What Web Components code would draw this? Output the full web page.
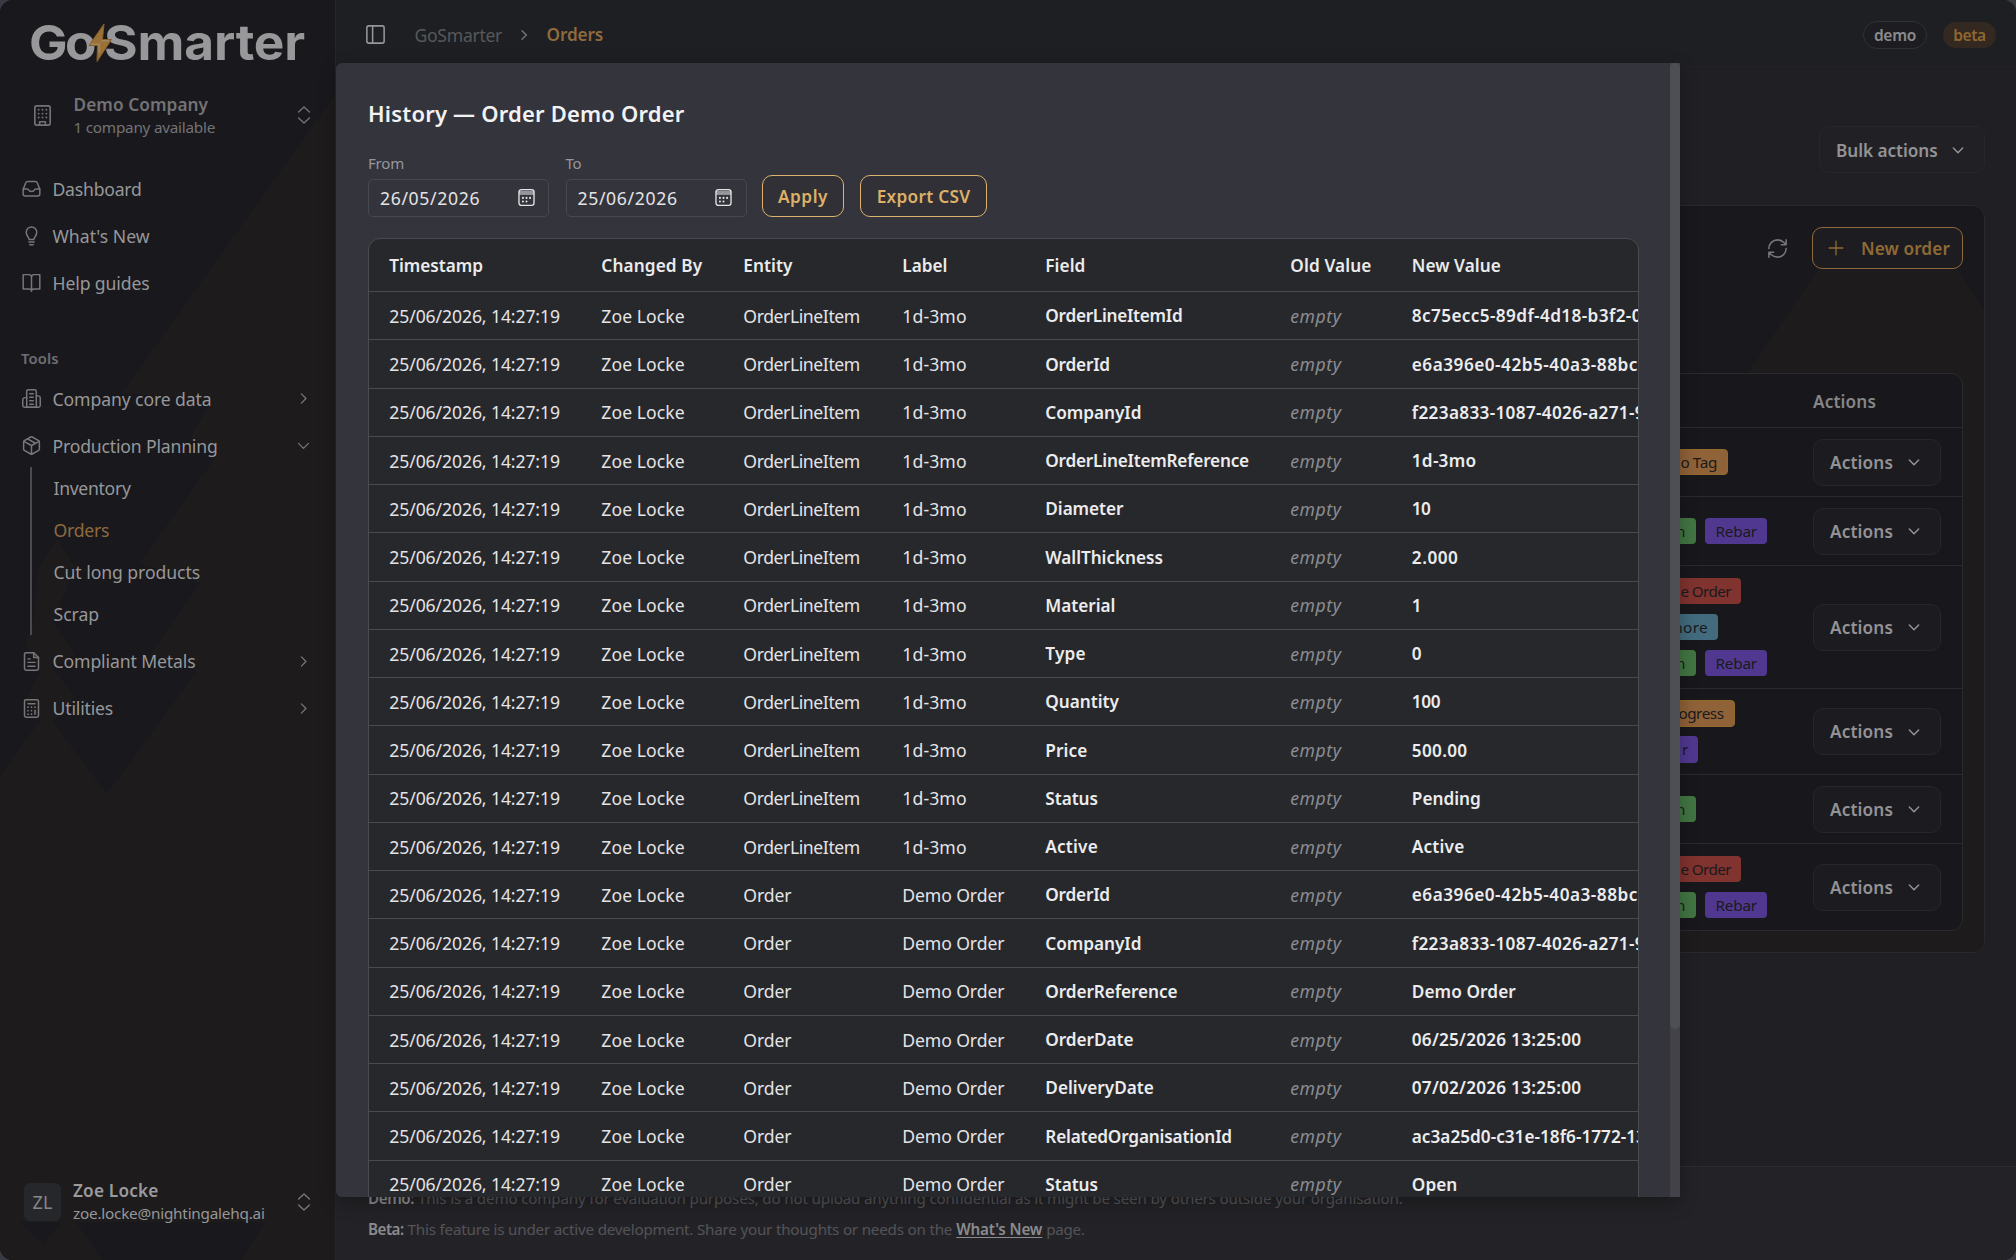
<!DOCTYPE html>
<html lang="en">
<head>
<meta charset="utf-8">
<title>GoSmarter – Orders</title>
<style>
html,body{margin:0;height:100%;background:#3a3a42;overflow:hidden}
body{font:17.600px/24px "Noto Sans","Open Sans",sans-serif;color:#97979a}
</style>
</head>
<body>
<app-shell></app-shell>
<script>
const define=(name,render,after)=>customElements.define(name,class extends HTMLElement{
  connectedCallback(){
    if(this.shadowRoot)return;
    this.attachShadow({mode:'open'}).innerHTML=render(this);
    if(after)after(this);
  }
});

/* Text run tracked to a known ink width; scale is the horizontal scale of its parent. */
define('fit-text',()=>`<style>:host{display:inline-block;white-space:nowrap}</style><slot></slot>`,el=>{
  const w=parseFloat(el.getAttribute('w'));
  if(!w)return;
  const n=el.textContent.length,k=parseFloat(el.getAttribute('scale'))||1;
  el.style.letterSpacing=((w+1.1-el.getBoundingClientRect().width)/n/k).toFixed(3)+'px';
});

const ICONS={
  panel:'<rect x="3" y="3" width="18" height="18" rx="2"/><path d="M9 3v18"/>',
  inbox:'<path d="M2.5 13l2.8-7.3A2.4 2.4 0 0 1 7.5 4h9a2.4 2.4 0 0 1 2.2 1.7L21.5 13v5.2a2.3 2.3 0 0 1-2.3 2.3H4.8a2.3 2.3 0 0 1-2.3-2.3z"/><path d="M2.5 12.5h4.8c.8 0 1.2.5 1.5 1.2.4 1.200 1.600 1.800 3.200 1.800s2.800-.6 3.200-1.800c.3-.7.7-1.200 1.500-1.200h4.800"/>',
  bulb:'<path d="M9.300 16.500c0-2-3.300-4-3.300-8.300a6 6 0 0 1 12 0c0 4.300-3.300 6.300-3.300 8.300z"/><path d="M9 19.500h6M10 22.500h4"/>',
  book:'<path d="M12 6v16M12 6c0-1.700-1.300-3-3-3H2.500v16.500H9c1.700 0 3 1 3 2.500 0-1.500 1.300-2.500 3-2.500h6.500V3H15c-1.700 0-3 1.300-3 3z"/>',
  building:'<rect x="4" y="2" width="16" height="20" rx="2"/><path d="M9 22v-3.500h6V22"/><path d="M8 6h.01M12 6h.01M16 6h.01M8 10h.01M12 10h.01M16 10h.01M8 14h.01M12 14h.01M16 14h.01" stroke-width="2"/>',
  office:'<path d="M6.500 22V4a2 2 0 0 1 2-2h7a2 2 0 0 1 2 2v18z"/><path d="M6.500 11H4.500a2.500 2.500 0 0 0-2.500 2.500V20a2 2 0 0 0 2 2h16a2 2 0 0 0 2-2V11.500A2.500 2.500 0 0 0 19.500 9h-2"/><path d="M10 6.500h4M10 10.500h4M10 14.500h4M10 18.500h4"/>',
  box:'<path d="M21 16.200V7.800a1.500 1.500 0 0 0-.8-1.300l-7.400-4.200a1.600 1.600 0 0 0-1.600 0L3.800 6.500A1.500 1.500 0 0 0 3 7.800v8.400a1.500 1.500 0 0 0 .8 1.300l7.400 4.200a1.600 1.600 0 0 0 1.600 0l7.400-4.200a1.500 1.500 0 0 0 .8-1.300z"/><path d="M3.300 7.200L12 12l8.700-4.800M12 22V12M7.500 4.400l9 5"/>',
  file:'<path d="M14.500 2H6a2 2 0 0 0-2 2v16a2 2 0 0 0 2 2h12a2 2 0 0 0 2-2V7.500z"/><path d="M14.500 2v5.500H20M8 9h2.500M8 13h8M8 17.500h8"/>',
  calc:'<rect x="4" y="2" width="16" height="20" rx="2"/><path d="M8 6.500h8M16 14v4.500"/><path d="M8 10.500h.01M12 10.500h.01M16 10.500h.01M8 14.500h.01M12 14.500h.01M8 18.500h.01M12 18.500h.01" stroke-width="2"/>',
  right:'<path d="M9 5.500l6.500 6.500L9 18.500"/>',
  down:'<path d="M5 9l7 7 7-7"/>',
  updown:'<path d="M5.500 8.500L12 2.500 18.500 8.500M5.500 15.500l6.500 6 6.500-6"/>',
  plus:'<path d="M12 3v18M3 12h18"/>',
  refresh:'<path d="M3 12a9 9 0 0 1 9-9 9.700 9.700 0 0 1 6.700 2.700L21 8M21 3v5h-5M21 12a9 9 0 0 1-9 9 9.700 9.700 0 0 1-6.700-2.700L3 16M8 16H3v5"/>',
  calendar:'<rect x="2.500" y="2" width="19" height="20" rx="3"/><path d="M3.500 5h17" stroke-width="3" stroke-opacity=".55"/><path d="M3 7.500h18" stroke-width="1.300"/><path d="M12 12.500h.01M16.500 12.500h.01M7.500 12.500h.01M7.500 17h.01M12 17h.01" stroke-width="2.600"/>'
};
define('ui-icon',el=>{
  const s=el.getAttribute('size')||20,k=el.getAttribute('stroke')||1.6;
  return `<style>:host{display:inline-flex;flex:none}svg{display:block}</style>
  <svg width="${s}" height="${s}" viewBox="0 0 24 24" fill="none" stroke="currentColor" stroke-width="${k}" stroke-linecap="round" stroke-linejoin="round">${ICONS[el.getAttribute('name')]}</svg>`;
});

define('brand-logo',()=>`<style>
:host{display:flex;align-items:center;height:67px;padding-left:29px;font:700 48.500px/67px Inter,sans-serif;color:#98989a}
.bolt{width:12px;height:38px;flex:none;overflow:visible;z-index:1;margin-left:1px}
.x{display:inline-block;transform:scaleX(1.06);transform-origin:0 50%}
.g{width:62px}.s{width:200px}
</style><span class="g"><span class="x"><fit-text scale="1.06" w="64">Go</fit-text></span></span><svg class="bolt" viewBox="0 0 12 38"><path d="M12 0L-3 21.500H5.500L5 37.500 19.500 15.500H10.500z" fill="#9a7238" stroke="#8b5f25" stroke-width="1"/><path d="M-1 20.300H7.500L7 29M17 16.700H9.500" stroke="#a0885e" fill="none" stroke-width="1.500"/></svg><span class="s"><span class="x"><fit-text scale="1.06" w="200">Smarter</fit-text></span></span>`);

define('nav-item',el=>{
  const c=el.getAttribute('chevron');
  return `<style>
:host{display:flex;align-items:center;height:47.2px;padding:0 23px 0 21px}
ui-icon{color:#77777a}fit-text{margin-left:10.500px}.c{margin-left:auto}
</style><ui-icon name="${el.getAttribute('icon')}" size="21" stroke="1.700"></ui-icon><fit-text w="${el.getAttribute('w')}">${el.getAttribute('label')}</fit-text>${c?`<ui-icon class="c" name="${c}" size="17" stroke="1.800"></ui-icon>`:''}`;
});

define('side-bar',()=>`<style>
:host{display:flex;flex-direction:column;width:335px;flex:none;border-right:1px solid #25252a;background:#19191d;box-sizing:content-box;position:relative}
.deco{position:absolute;inset:0;z-index:0}
.body{position:relative;display:flex;flex-direction:column;flex:1;padding-top:9px}
.row{display:flex;align-items:center;padding-right:21px}
.two{display:flex;flex-direction:column;margin-left:12px}
.company{height:62px;padding-left:31px;margin-top:8px;color:#737376}
.company ui-icon{color:#737376}
.company .two{margin-left:19.500px;padding-top:2px}
.two fit-text{align-self:flex-start}
.t{font-weight:600;font-size:17.200px;line-height:22px}
.s{font-size:15.300px;line-height:22px}
.end{margin-left:auto}
nav{margin-top:19px}
.tools{height:34px;margin-top:34.500px;padding-left:21px;display:flex;align-items:center;font-size:14.800px;font-weight:600;color:#6e6e72}
.sub{margin:-2px 0 2px 30px;border-left:2px solid #4a4a4f;padding-left:21.500px;height:168px;display:flex;flex-direction:column}
.sub span{height:42px;display:flex;align-items:center}
.on{color:#8f6a3e}
.profile{margin-top:auto;margin-bottom:30px;height:56px;padding-left:24px}
.av{width:37px;height:38px;border-radius:6px;background:#25272b;display:flex;align-items:center;justify-content:center;font-size:18px;color:#87878a}
.profile .t{color:#9b9b9e}.profile ui-icon{color:#77777a}
</style>
<svg class="deco" width="335" height="1260" viewBox="0 0 335 1260"><g fill="#1d1b1c">
<path d="M335 95L122 393 212 400 190 437 217 455 140 563 200 583 150 655 197 671 107 794 53 722 75 697 53 668 75 655 53 622 75 567 57 538 38 570 33 625 25 645 40 672 25 700 40 720 0 776V1260H335z"/></g>
<path d="M20 1222H62L43 1244zM76 1222H265L242 1260H102z" fill="#19191d"/></svg>
<div class="body">
<brand-logo></brand-logo>
<div class="row company"><ui-icon name="building" size="23" stroke="1.700"></ui-icon><div class="two"><fit-text class="t" w="133.500">Demo Company</fit-text><fit-text class="s" w="140.500">1 company available</fit-text></div><ui-icon class="end" name="updown" size="20" stroke="1.700"></ui-icon></div>
<nav>
<nav-item icon="inbox" label="Dashboard" w="88"></nav-item>
<nav-item icon="bulb" label="What's New" w="96"></nav-item>
<nav-item icon="book" label="Help guides" w="96"></nav-item>
</nav>
<div class="tools"><fit-text w="36.500">Tools</fit-text></div>
<nav-item icon="office" label="Company core data" w="158" chevron="right"></nav-item>
<nav-item icon="box" label="Production Planning" w="164" chevron="down"></nav-item>
<div class="sub"><span><fit-text w="76">Inventory</fit-text></span><span class="on"><fit-text w="54.500">Orders</fit-text></span><span><fit-text w="145.500">Cut long products</fit-text></span><span><fit-text w="44.500">Scrap</fit-text></span></div>
<nav-item icon="file" label="Compliant Metals" w="142" chevron="right"></nav-item>
<nav-item icon="calc" label="Utilities" w="59.500" chevron="right"></nav-item>
<div class="row profile"><div class="av"><fit-text w="19">ZL</fit-text></div><div class="two"><fit-text class="t" w="84.500">Zoe Locke</fit-text><fit-text class="s" w="190.500">zoe.locke@nightingalehq.ai</fit-text></div><ui-icon class="end" name="updown" size="20" stroke="1.700"></ui-icon></div>
</div>`);

define('top-bar',()=>`<style>
:host{display:flex;align-items:center;height:67px;box-sizing:border-box;padding:3px 20px 0 28px;background:#1e1f22;border-bottom:1px solid #222226;flex:none}
.a{margin-left:27.500px;color:#58585b}.b{margin:0 14.500px 0 14px;color:#77777a}.c{font-weight:600;font-size:17.200px;color:#8f6a3e}
.pill{box-sizing:border-box;border-radius:14px;height:28px;display:flex;align-items:center;justify-content:center;font-weight:600;font-size:15.500px;padding-top:1px}
.demo{margin-left:auto;width:64px;border:1px solid #303035;background:#1d1d21;color:#8b8b8e}
.beta{margin-left:16px;width:53px;height:26px;background:#332920;color:#8f6830}
</style><ui-icon name="panel" size="23" stroke="1.600"></ui-icon><fit-text class="a" w="86.500">GoSmarter</fit-text><ui-icon class="b" name="right" size="16" stroke="2"></ui-icon><fit-text class="c" w="55.500">Orders</fit-text><span class="pill demo"><fit-text w="41">demo</fit-text></span><span class="pill beta"><fit-text w="31.500">beta</fit-text></span>`);

define('menu-button',el=>`<style>
:host{box-sizing:border-box;display:flex;align-items:center;justify-content:space-between;height:47px;width:128px;padding:0 18px 0 16px;border:1px solid #26262b;border-radius:10px;background:#1c1c20;font-weight:600;font-size:17.200px;color:#939396}
fit-text{padding-top:1px}
</style><fit-text w="${el.getAttribute('w')}">${el.getAttribute('label')}</fit-text><ui-icon name="down" size="16" stroke="2.200"></ui-icon>`);

/* Tag lines: "kind|width|text|text width" separated by commas, lines by slashes. */
define('order-row',el=>`<style>
:host{display:flex;align-items:center;box-sizing:border-box;height:${el.getAttribute('h')}px;border-top:1px solid #2b2b2f;padding-left:1250px}
.tags{width:173px;display:flex;flex-direction:column;gap:9.500px;flex:none}
.line{display:flex;gap:9px}
.tag{box-sizing:border-box;height:26.500px;border-radius:4px;padding-right:10px;text-align:right;font-size:15.300px;line-height:27.500px;color:#1b1a1b;white-space:nowrap}
.o{background:#8f6238;border:1px solid #94682b;line-height:25.500px}.g{background:#427543}.p{background:#503890}.r{background:#80332f}.t{background:#426b7d}
</style><div class="tags">${el.getAttribute('tags').split('/').map(l=>`<div class="line">${l.split(',').map(t=>{const[k,w,s,f]=t.split('|');return `<span class="tag ${k}" style="width:${w}px"><fit-text w="${f}">${s}</fit-text></span>`}).join('')}</div>`).join('')}</div><menu-button label="Actions" w="62"></menu-button>`);

define('orders-page',()=>`<style>
:host{display:flex;flex-direction:column;flex:1;background:#202024}
.bulk{display:flex;justify-content:flex-end;padding:59px 31px 0 0}
.bulk menu-button{width:166px;background:#212125;padding-top:1px}
.card{margin:32px 31px 0 32px;height:748px;box-sizing:border-box;border:1px solid #2a2a2e;border-radius:12px;background:#19191d;overflow:hidden;position:relative}
.deco{position:absolute;inset:0}
.in{position:relative;padding:21px 21px 0 20px}
.bar{display:flex;justify-content:flex-end;align-items:center;gap:23px;height:42px;color:#77777a}
.new{box-sizing:border-box;width:151px;height:42px;border:1px solid #8f6a3e;border-radius:10px;background:#1d1d21;color:#8f6a35;font-weight:600;font-size:17.200px;display:flex;align-items:center;padding:0 12px 0 14px;justify-content:space-between}
.new fit-text{padding-top:1px}
.table{margin-top:104px;border:1px solid #2a2a2e;border-radius:12px;background:#18181c;overflow:hidden;height:558px;box-sizing:border-box}
.th{height:53px;display:flex;align-items:center;padding:2px 0 0 1423px;box-sizing:border-box;font-weight:600;font-size:17.200px;color:#858588}
footer{margin-top:auto;height:94.500px;box-sizing:border-box;border-top:1px solid #2b2b30;background:#232327;padding:16px 32px;font-size:15.200px;color:#545458;display:flex;flex-direction:column;line-height:31px}
footer div{white-space:nowrap;display:flex}
footer b{font-weight:600;color:#8b8b8e}
u{text-underline-offset:2px}
fit-text+fit-text{margin-left:4px}
</style>
<div class="bulk"><menu-button label="Bulk actions" w="100.500"></menu-button></div>
<div class="card"><svg class="deco" width="1616" height="747" viewBox="369 206 1616 747"><path d="M1818 270L1747 374V953H1985V312L1958 270z" fill="#1d1b1c"/><path d="M1600 928H1800V953H1600z" fill="#1d1b1c"/></svg>
<div class="in"><div class="bar"><ui-icon name="refresh" size="23" stroke="1.600"></ui-icon><span class="new"><ui-icon name="plus" size="18" stroke="1.800"></ui-icon><fit-text w="88">New order</fit-text></span></div>
<div class="table"><div class="th"><fit-text w="62">Actions</fit-text></div>
<order-row h="69" tags="o|88|o Tag|35.500"></order-row>
<order-row h="69" tags="g|56|n|9,p|62|Rebar|40.500"></order-row>
<order-row h="123" tags="r|101|e Order|49.500/t|78|more|38.500/g|56|n|9,p|62|Rebar|40.500"></order-row>
<order-row h="86" tags="o|94.500|ogress|44/p|58|r|5"></order-row>
<order-row h="69" tags="g|56|n|9"></order-row>
<order-row h="87" tags="r|101|e Order|49.500/g|56|n|9,p|62|Rebar|40.500"></order-row>
</div></div></div>
<footer><div><fit-text w="45"><b>Demo:</b></fit-text><fit-text w="983.500">This is a demo company for evaluation purposes, do not upload anything confidential as it might be seen by others outside your organisation.</fit-text></div>
<div><fit-text w="34.500"><b>Beta:</b></fit-text><fit-text w="543.500">This feature is under active development. Share your thoughts or needs on the</fit-text><fit-text w="85"><b><u>What's New</u></b></fit-text><fit-text w="37">page.</fit-text></div></footer>`);

define('date-field',el=>`<style>
:host{display:flex;flex-direction:column;gap:6px}
.l{font-size:15px;line-height:20px;color:#97979b;align-self:flex-start}
.i{box-sizing:border-box;width:181px;height:38px;border:1px solid #48484e;border-radius:5px;display:flex;align-items:center;justify-content:space-between;padding:0 12.500px 0 11px;color:#e4e4e6}
ui-icon{padding-bottom:1px}
</style><fit-text class="l" w="${el.getAttribute('w')}">${el.getAttribute('label')}</fit-text><div class="i"><fit-text w="99">${el.getAttribute('value')}</fit-text><ui-icon name="calendar" size="19" stroke="1.700"></ui-icon></div>`);

define('gold-button',el=>`<style>
:host{box-sizing:border-box;height:42px;border:1px solid #dcb26c;border-radius:10px;display:flex;align-items:center;justify-content:center;font-weight:600;font-size:17.200px;color:#deb067;background:#303036}
fit-text{padding-top:1px}
</style><fit-text w="${el.getAttribute('w')}">${el.getAttribute('label')}</fit-text>`);

const LI=['OrderLineItem',115.5,'1d-3mo',63.3],OR=['Order',47,'Demo Order',101];
const HISTORY=[
 [LI,'OrderLineItemId',136,'8c75ecc5-89df-4d18-b3f2-0',229],
 [LI,'OrderId',63.5,'e6a396e0-42b5-40a3-88bc-',231],
 [LI,'CompanyId',95,'f223a833-1087-4026-a271-9',232],
 [LI,'OrderLineItemReference',202.5,'1d-3mo',63.4],
 [LI,'Diameter',77,'10',17.5],
 [LI,'WallThickness',116.5,'2.000',45.5],
 [LI,'Material',69,'1',7],
 [LI,'Type',39.5,'0',9],
 [LI,'Quantity',72.5,'100',27.5],
 [LI,'Price',41,'500.00',54.5],
 [LI,'Status',51.5,'Pending',68],
 [LI,'Active',51.5,'Active',51.5],
 [OR,'OrderId',63.5,'e6a396e0-42b5-40a3-88bc-',231],
 [OR,'CompanyId',95,'f223a833-1087-4026-a271-9',232],
 [OR,'OrderReference',131,'Demo Order',103],
 [OR,'OrderDate',87,'06/25/2026 13:25:00',168.5],
 [OR,'DeliveryDate',107.5,'07/02/2026 13:25:00',168.5],
 [OR,'RelatedOrganisationId',185.5,'ac3a25d0-c31e-18f6-1772-13',233],
 [OR,'Status',51.5,'Open',44.5]
];
const HEAD=[['Timestamp',92.5],['Changed By',100],['Entity',48],['Label',44],['Field',39],['Old Value',80],['New Value',88]];
const f=(t,w,c='')=>`<fit-text class="${c}" w="${w}">${t}</fit-text>`;
define('history-table',()=>`<style>
:host{display:block;box-sizing:border-box;width:1271px;border:1px solid #4a4b50;border-radius:12px 12px 0 0;background:#27282c;overflow:hidden;color:#e4e4e6}
.r{display:grid;grid-template-columns:212px 142px 159px 143px 245px 121.500px 1fr;align-items:center;justify-items:start;height:48.250px;box-sizing:border-box;padding-left:20.300px;border-top:1px solid #4a4b50}
.h{height:52.200px;border-top:0;padding-top:2px;font-weight:600;font-size:17.200px;color:#ebebed}
.b{font-weight:600;font-size:17.200px;color:#ececee;padding-top:1px}.e{font-style:italic;color:#8d8d91}
</style><div class="r h">${HEAD.map(h=>f(...h)).join('')}</div>${HISTORY.map(([k,a,aw,v,vw])=>`<div class="r">${f('25/06/2026, 14:27:19',169.5)+f('Zoe Locke',82.4)+f(k[0],k[1])+f(k[2],k[3])+f(a,aw,'b')+f('empty',50,'e')+f(v,vw,'b')}</div>`).join('')}`);

define('history-dialog',()=>`<style>
:host{position:absolute;left:336px;top:63px;width:1344px;height:1134px;display:flex;background:#34343c;border-radius:6px 0 0 6px;overflow:hidden;box-shadow:0 6px 18px rgba(0,0,0,.28);z-index:5}
.m{flex:1;min-width:0;padding:34px 0 0 32px;overflow:hidden}
h2{margin:0;font-size:22px;line-height:32px;font-weight:600;color:#f2f2f4}
.f{display:flex;align-items:flex-end;margin:24px 0 21px;height:64px}
date-field{margin-right:16.500px}gold-button{margin-right:16px}
gold-button.a{width:82px;margin-left:-1px}gold-button.x{width:127px}
.bar{width:10px;background:#424248}.bar i{display:block;height:966px;background:#4e4e55;border-radius:5px}
</style><div class="m"><h2><fit-text w="315.500">History — Order Demo Order</fit-text></h2>
<div class="f"><date-field label="From" w="35" value="26/05/2026"></date-field><date-field label="To" w="14.500" value="25/06/2026"></date-field><gold-button class="a" w="49" label="Apply"></gold-button><gold-button class="x" w="92.500" label="Export CSV"></gold-button></div>
<history-table></history-table></div><div class="bar"><i></i></div>`);

define('app-shell',()=>`<style>
:host{position:relative;display:flex;width:2016px;height:1260px;box-sizing:border-box;border-radius:13px;overflow:hidden;background:#19191d}
main{flex:1;min-width:0;display:flex;flex-direction:column}
</style><side-bar></side-bar><main><top-bar></top-bar><orders-page></orders-page></main><history-dialog></history-dialog>`);
</script>
</body>
</html>
